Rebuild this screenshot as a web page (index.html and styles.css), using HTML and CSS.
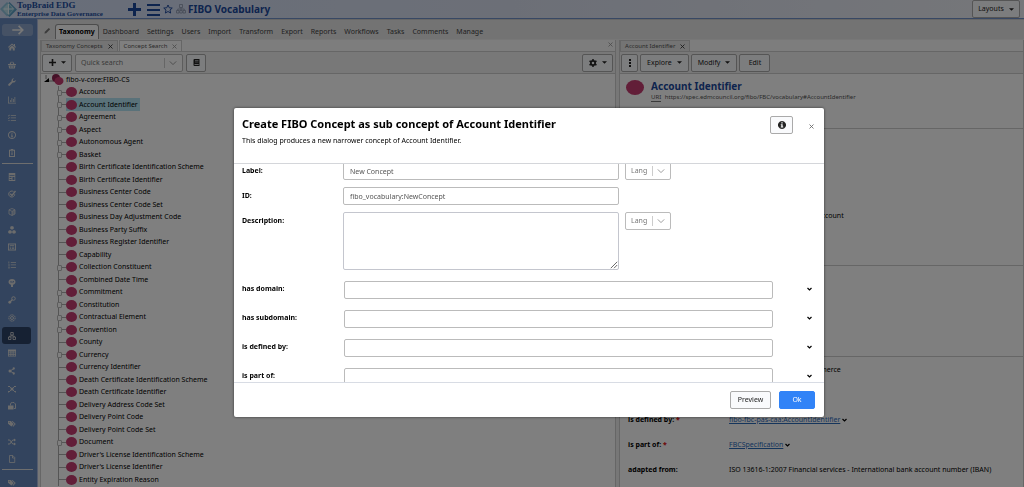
FILE: index.html
```html
<!DOCTYPE html>
<html lang="en">
<head>
<meta charset="utf-8">
<title>FIBO Vocabulary - TopBraid EDG</title>
<link rel="stylesheet" href="styles.css">
</head>
<body>
<svg class="defs" aria-hidden="true">
  <symbol id="caret" viewBox="0 0 8 8"><path d="M0 2h8L4 6z"/></symbol>
  <symbol id="cross" viewBox="0 0 10 10"><path d="M1 1l8 8M9 1L1 9" fill="none" stroke="currentColor" stroke-width="1.7"/></symbol>
  <symbol id="chev" viewBox="0 0 10 10"><path d="M1 3l4 4 4-4" fill="none" stroke="currentColor" stroke-width="1.2"/></symbol>
  <symbol id="chev-bold" viewBox="0 0 10 10"><path d="M1 2l4 4 4-4" fill="none" stroke="currentColor" stroke-width="2.4"/></symbol>
  <symbol id="tags" viewBox="0 0 16 16"><path fill-rule="evenodd" d="M0 2h5.500l6 6-4.500 5L0 7.500zM2.500 3.500a1 1 0 1 0 .1 0z"/><path d="M7 2h2l6.500 6-5 5.500-1.300-1.200L13 8z"/></symbol>
</svg>
<div class="app">
  <header class="top">
    <svg class="logo" viewBox="0 0 34 38"><path d="M0 18L14 4l5 5-9 9 9 9-5 6z" fill="#8fc3dc"/><path d="M19 4l15 15-15 15-5-5 10-10L14 9z" fill="#5d9fc4"/><path d="M5 18l12-12 12 12-12 13z" fill="#b8dce8"/><path d="M17 8l10 11-10 10" fill="#75b5cf"/><path d="M8 18h18M17 8v20" stroke="#e8f4fa" stroke-width="2"/></svg>
    <div class="brand"><span class="brand-a">TopBraid EDG</span><span class="brand-b">Enterprise Data Governance</span></div>
    <div class="title-area">
      <button class="ib" aria-label="New"><svg class="i13" viewBox="0 0 13 13"><path d="M5 0h3v5h5v3H8v5H5V8H0V5h5z"/></svg></button>
      <button class="ib" aria-label="Menu"><svg class="i13" viewBox="0 0 13 13"><path d="M0 1h13v2H0zm0 5h13v2H0zm0 5h13v2H0z"/></svg></button>
      <button class="ib" aria-label="Favorite"><svg class="i10" viewBox="0 0 20 20"><path d="M10 2l2.500 5.500 6 .6-4.500 4 1.300 6L10 15l-5.300 3.100 1.300-6-4.500-4 6-.6z" fill="none" stroke="currentColor" stroke-width="1.900"/></svg></button>
      <svg class="i10 pale" viewBox="0 0 20 20"><path d="M7 1h6v6H7zM1 13h5v5H1zm6.500 0h5v5h-5zm6.500 0h5v5h-5zM10 7v6M3.500 13v-3h13v3" fill="none" stroke="currentColor" stroke-width="1.600"/></svg>
      <h1>FIBO Vocabulary</h1>
    </div>
    <button class="btn layouts">Layouts <svg class="car"><use href="#caret"/></svg></button>
  </header>
  <div class="main">
    <nav class="side" aria-label="Tools">
      <button class="expand" aria-label="Expand"><svg viewBox="0 0 28 16"><path d="M7 8h14M15.500 2.500L21 8l-5.500 5.500" fill="none" stroke="currentColor" stroke-width="2.200"/></svg></button>
      <div class="group g1">
        <a href="#" aria-label="Home"><svg viewBox="0 0 16 16"><path d="M8 1L0 8l1 1.500 7-6 7 6L16 8l-2-2V2h-2v2z"/><path d="M2.500 9.500L8 5l5.500 4.500V15H9.500v-4h-3v4h-4z"/></svg></a>
        <a href="#" aria-label="Basket"><svg viewBox="0 0 16 16"><path d="M0 6h3l3-5 1.500 1L5.500 6h5L8.500 2 10 1l3 5h3v2H0z"/><path fill-rule="evenodd" d="M1 9h14l-1.500 6h-11zM4 10v4h1v-4zm3.500 0v4h1v-4zm3.500 0v4h1v-4z"/></svg></a>
        <a href="#" aria-label="Tools"><svg viewBox="0 0 16 16"><path d="M15.500 4a4.500 4.500 0 0 1-6 4.800L4 15a2 2 0 0 1-3-3l6.200-5.500A4.500 4.500 0 0 1 12 .7L9.700 3.500l.5 2.300 2.300.4z"/></svg></a>
        <a href="#" aria-label="Charts"><svg viewBox="0 0 16 16"><path d="M0 1h1.500v12.500H16V15H0zM4 8h1.500v4H4zm3-4h1.500v8H7zm3 2h1.500v6H10zm3-4h1.500v10H13z"/></svg></a>
        <a href="#" aria-label="Tasks"><svg viewBox="0 0 16 16"><path d="M0 2l1 1.500L3.500 1v2L1 5 0 4zM5.500 2H16v1.500H5.500zm0 5H16v1.500H5.500zm0 5H16v1.500H5.500zM0 7l1 1.500L3.500 6v2L1 10 0 9zM1 12h2v2H1z"/></svg></a>
        <a href="#" aria-label="Info"><svg viewBox="0 0 16 16"><path fill-rule="evenodd" d="M8 0a8 8 0 1 0 .01 0zM8 1.800a6.200 6.200 0 1 1-.01 0z"/><path d="M7 3.500h2v2H7zM6 7h3v4h1v1.500H6V11h1V8.500H6z"/></svg></a>
        <a href="#" aria-label="Clipboard"><svg viewBox="0 0 16 16"><path fill-rule="evenodd" d="M2 1.500h3.500V0h5v1.500H14V16H2zm2 2V14h8V3.500z"/><path d="M6.500 5h3v2h-3zm0 3h3v1.500h-3zm0 2.500h3V12h-3z"/></svg></a>
      </div>
      <hr>
      <div class="group g2">
        <a href="#" aria-label="Datasheet"><svg viewBox="0 0 16 16"><path fill-rule="evenodd" d="M1.500 0h13v16h-13zM3 4.500V6h10V4.500zM3 8v2h4V8zm6 0v6h4V8zm-6 4v2h4v-2z"/></svg></a>
        <a href="#" aria-label="Checks"><svg viewBox="0 0 16 16"><path d="M13.500 8.500A6 6 0 1 1 11 3.200" fill="none" stroke="currentColor" stroke-width="2"/><path d="M4.500 7.500L8 11l7-9" fill="none" stroke="currentColor" stroke-width="2.600"/></svg></a>
        <a href="#" aria-label="Cube"><svg viewBox="0 0 16 16"><path d="M8 1l6 2.500v8.500L8 15l-6-3V3.500zM2 4l6 2.500L14 4M8 6.500V15" fill="none" stroke="currentColor" stroke-width="1.500"/><path d="M8 6.500L14 4v8l-6 3z" opacity=".5"/></svg></a>
        <a href="#" aria-label="Cubes"><svg viewBox="0 0 16 16"><path d="M8 0l3.500 1.700v4L8 7.500 4.500 5.700v-4zM4 8l3.500 1.800v4L4 15.500.5 13.800v-4zm8 0l3.500 1.800v4L12 15.500l-3.500-1.700v-4z"/></svg></a>
        <a href="#" aria-label="Forms"><svg viewBox="0 0 16 16"><path fill-rule="evenodd" d="M0 1h16v14H0zm1.800 1.800v10.400h12.400V2.800z"/><path d="M3.500 4.500h9V6h-9zm0 3h3V9h-3zm4.500 0h4.500V9H8zm-4.500 3h3V12h-3zm4.500 0h4.500V12H8z"/></svg></a>
        <a href="#" aria-label="Ordered list"><svg viewBox="0 0 16 16"><path d="M1 1h1.500v4H1zm0 5.500h2v3H1zM1 11h2v4H1zM5.500 2H16v1.500H5.500zm0 5H16v1.500H5.500zm0 5H16v1.500H5.500z"/></svg></a>
        <a href="#" aria-label="Trees"><svg viewBox="0 0 16 16"><path fill-rule="evenodd" d="M8 0c4 0 7 2.500 7 6 0 3-2.500 5-5 5.500V16H6v-4.500C3.500 11 1 9 1 6c0-3.500 3-6 7-6zM5 4v3l2 1V4zm4 1v3l3-2V4z"/></svg></a>
        <a href="#" aria-label="Links"><svg viewBox="0 0 16 16"><circle cx="11" cy="5" r="3.500" fill="none" stroke="currentColor" stroke-width="2"/><path d="M8.500 7.500L4 12" stroke="currentColor" stroke-width="2.600"/><circle cx="3.500" cy="12.500" r="2.800"/></svg></a>
        <a href="#" aria-label="Settings"><svg viewBox="0 0 16 16"><circle cx="8" cy="8" r="6.300" fill="none" stroke="currentColor" stroke-width="2" stroke-dasharray="3 1.200"/><circle cx="8" cy="8" r="3" fill="none" stroke="currentColor" stroke-width="1.800"/></svg></a>
        <a href="#" class="on" aria-label="Taxonomies"><svg viewBox="0 0 16 16"><path d="M5.500 1h5v5h-5zM1 10h5v5H1zm9 0h5v5h-5zM8 6v2M3.500 10V8h9v2" fill="none" stroke="currentColor" stroke-width="1.600"/></svg></a>
        <a href="#" aria-label="Table"><svg viewBox="0 0 16 16"><path fill-rule="evenodd" d="M0 1h16v14H0zM1.500 5v2H5V5zm5 0v2h3V5zM11 5v2h3.500V5zM1.500 8.500v2H5v-2zm5 0v2h3v-2zm4.500 0v2h3.500v-2zM1.500 12v1.500H5V12zm5 0v1.500h3V12zm4.500 0v1.500h3.500V12z"/></svg></a>
        <a href="#" aria-label="Share"><svg viewBox="0 0 16 16"><path d="M12 3L4 8l8 5" fill="none" stroke="currentColor" stroke-width="1.800"/><circle cx="11.500" cy="3" r="2.300"/><circle cx="4" cy="8" r="3"/><circle cx="11.500" cy="13" r="2.300"/></svg></a>
        <a href="#" aria-label="Network"><svg viewBox="0 0 16 16"><path d="M2 2l12 12M14 2L2 14M0 3h4M12 3h4M1 12v3M15 12v3" stroke="currentColor" stroke-width="1.800"/><circle cx="8" cy="8" r="3"/></svg></a>
        <a href="#" aria-label="Unlock"><svg viewBox="0 0 16 16"><path d="M5 7V4a3.500 3.500 0 0 1 4-3h3l3 3v9h-3" fill="none" stroke="currentColor" stroke-width="1.800"/><path d="M0 7h11v8H0z"/></svg></a>
        <a href="#" aria-label="Tags"><svg><use href="#tags"/></svg></a>
        <a href="#" aria-label="Crosswalks"><svg viewBox="0 0 16 16"><path d="M0 4h3.500l6 8H13M0 12h3.500l6-8H13" fill="none" stroke="currentColor" stroke-width="2"/><path d="M12 1l4 3-4 3zM12 9l4 3-4 3z"/></svg></a>
        <a href="#" aria-label="File"><svg viewBox="0 0 16 16"><path d="M3 1h6.500L13.500 5v10H3zM9 1v5h4.500" fill="none" stroke="currentColor" stroke-width="1.600"/></svg></a>
      </div>
      <hr>
      <div class="group g3"><a href="#" aria-label="Labels"><svg><use href="#tags"/></svg></a></div>
    </nav>
    <div class="work">
      <nav class="tabs" aria-label="Sections">
        <svg class="pencil" viewBox="0 0 16 16"><path d="M1 15l1-4L11 2l3 3-9 9z"/></svg>
        <a href="#" class="cur">Taxonomy</a><a href="#">Dashboard</a><a href="#">Settings</a><a href="#">Users</a><a href="#">Import</a><a href="#">Transform</a><a href="#">Export</a><a href="#">Reports</a><a href="#">Workflows</a><a href="#">Tasks</a><a href="#">Comments</a><a href="#">Manage</a>
      </nav>
      <div class="panels">
        <section class="panel left">
          <div class="ptabs"><span class="ptab">Taxonomy Concepts <svg class="x"><use href="#cross"/></svg></span><span class="ptab open">Concept Search <svg class="x dim"><use href="#cross"/></svg></span><svg class="x dim far"><use href="#cross"/></svg></div>
          <div class="tools">
            <button class="btn add" aria-label="Add"><svg class="i7" viewBox="0 0 13 13"><path d="M5 0h3v5h5v3H8v5H5V8H0V5h5z"/></svg><svg class="car"><use href="#caret"/></svg></button>
            <div class="combo search"><input type="text" placeholder="Quick search" aria-label="Quick search"><svg class="cv"><use href="#chev"/></svg></div>
            <button class="btn book" aria-label="Book"><svg class="i7" viewBox="0 0 14 14"><path fill-rule="evenodd" d="M3 0h10v14H3a2 2 0 0 1-2-2V2a2 2 0 0 1 2-2zm1 3v1h7V3zm0 2.500v1h7v-1zM3 10.500V12h8.500v-1.500z"/></svg></button>
            <button class="btn gear" aria-label="Options"><svg class="i8" viewBox="0 0 16 16"><circle cx="8" cy="8" r="4.300" fill="none" stroke="currentColor" stroke-width="3.400"/><path d="M8 0v3M8 13v3M1.100 4l2.600 1.500M12.300 10.500l2.600 1.500M1.100 12l2.600-1.500M12.300 5.500L14.900 4" stroke="currentColor" stroke-width="3"/></svg><svg class="car"><use href="#caret"/></svg></button>
          </div>
          <div class="tree">
            <div class="root"><svg class="root-ic" viewBox="0 0 20 12"><path d="M0 8l5-4v4z"/><path d="M2 1v4M5 7h5" stroke="#888" stroke-width="1" fill="none"/><ellipse cx="12" cy="4" rx="4" ry="4" fill="#8c2450"/><ellipse cx="15" cy="7" rx="4.500" ry="4" fill="#c43c70"/></svg>fibo-v-core:FIBO-CS</div>
            <ul>
              <li class="k"><span>Account</span></li>
              <li class="k"><span class="sel">Account Identifier</span></li>
              <li class="k"><span>Agreement</span></li>
              <li class="k"><span>Aspect</span></li>
              <li class="k"><span>Autonomous Agent</span></li>
              <li class="k"><span>Basket</span></li>
              <li><span>Birth Certificate Identification Scheme</span></li>
              <li><span>Birth Certificate Identifier</span></li>
              <li><span>Business Center Code</span></li>
              <li><span>Business Center Code Set</span></li>
              <li><span>Business Day Adjustment Code</span></li>
              <li><span>Business Party Suffix</span></li>
              <li><span>Business Register Identifier</span></li>
              <li><span>Capability</span></li>
              <li class="k"><span>Collection Constituent</span></li>
              <li><span>Combined Date Time</span></li>
              <li class="k"><span>Commitment</span></li>
              <li class="k"><span>Constitution</span></li>
              <li class="k"><span>Contractual Element</span></li>
              <li class="k"><span>Convention</span></li>
              <li><span>County</span></li>
              <li class="k"><span>Currency</span></li>
              <li><span>Currency Identifier</span></li>
              <li><span>Death Certificate Identification Scheme</span></li>
              <li><span>Death Certificate Identifier</span></li>
              <li><span>Delivery Address Code Set</span></li>
              <li><span>Delivery Point Code</span></li>
              <li><span>Delivery Point Code Set</span></li>
              <li class="k"><span>Document</span></li>
              <li><span>Driver's License Identification Scheme</span></li>
              <li><span>Driver's License Identifier</span></li>
              <li><span>Entity Expiration Reason</span></li>
            </ul>
          </div>
        </section>
        <section class="panel right">
          <div class="ptabs"><span class="ptab">Account Identifier <svg class="x"><use href="#cross"/></svg></span></div>
          <div class="tools">
            <button class="btn dots" aria-label="More"><svg class="i8" viewBox="0 0 8 8"><path d="M3 0h2v2H3zm0 3h2v2H3zm0 3h2v2H3z"/></svg></button>
            <button class="btn">Explore <svg class="car"><use href="#caret"/></svg></button>
            <button class="btn">Modify <svg class="car"><use href="#caret"/></svg></button>
            <button class="btn edit">Edit</button>
          </div>
          <div class="res">
            <span class="blob"></span>
            <div><h2>Account Identifier</h2><p class="uri"><abbr>URI</abbr> https://spec.edmcouncil.org/fibo/FBC/vocabulary#AccountIdentifier</p></div>
          </div>
          <div class="sec s1"><p class="val">identifier for the customer account</p></div>
          <div class="sec s2"></div>
          <div class="sec s3">
            <p class="val">Financial Business and Commerce</p>
            <dl>
              <dt>is defined by: <b>*</b></dt><dd><a href="#">fibo-fbc-pas-caa:AccountIdentifier</a> <svg class="bc"><use href="#chev-bold"/></svg></dd>
              <dt>is part of: <b>*</b></dt><dd><a href="#">FBCSpecification</a> <svg class="bc"><use href="#chev-bold"/></svg></dd>
              <dt>adapted from:</dt><dd>ISO 13616-1:2007 Financial services - International bank account number (IBAN)</dd>
            </dl>
          </div>
        </section>
      </div>
    </div>
  </div>
</div>
<div class="overlay">
  <div class="dialog" role="dialog" aria-labelledby="dlg-title">
    <div class="dhead">
      <div class="dtext"><h3 id="dlg-title">Create FIBO Concept as sub concept of Account Identifier</h3><p>This dialog produces a new narrower concept of Account Identifier.</p></div>
      <button class="btn info" aria-label="Information"><svg class="i8" viewBox="0 0 16 16"><path fill-rule="evenodd" d="M8 0a8 8 0 1 0 .01 0zM6.700 2.500h2.600v2.600H6.700zM5.500 6.500h3.800V11h1.200v2h-5v-2h1.200V8.500H5.500z"/></svg></button>
      <button class="close" aria-label="Close"><svg><use href="#cross"/></svg></button>
    </div>
    <form class="dbody">
      <div class="row"><label for="f1">Label:</label><input class="mid" id="f1" type="text" value="New Concept"><div class="combo lang"><select aria-label="Label language"><option>Lang</option></select><svg class="cv"><use href="#chev"/></svg></div></div>
      <div class="row"><label for="f2">ID:</label><input class="mid" id="f2" type="text" value="fibo_vocabulary:NewConcept"></div>
      <div class="row desc"><label for="f3">Description:</label><div class="ta"><textarea id="f3"></textarea><svg viewBox="0 0 10 10"><path d="M1 9l8-8M5 9l4-4" stroke="#444" stroke-width="1" fill="none"/></svg></div><div class="combo lang"><select aria-label="Description language"><option>Lang</option></select><svg class="cv"><use href="#chev"/></svg></div></div>
      <div class="row wide"><label for="f4">has domain:</label><input id="f4" type="text"><button type="button" class="more" aria-label="has domain options"><svg class="bc"><use href="#chev-bold"/></svg></button></div>
      <div class="row wide"><label for="f5">has subdomain:</label><input id="f5" type="text"><button type="button" class="more" aria-label="has subdomain options"><svg class="bc"><use href="#chev-bold"/></svg></button></div>
      <div class="row wide"><label for="f6">is defined by:</label><input id="f6" type="text"><button type="button" class="more" aria-label="is defined by options"><svg class="bc"><use href="#chev-bold"/></svg></button></div>
      <div class="row wide"><label for="f7">is part of:</label><input id="f7" type="text"><button type="button" class="more" aria-label="is part of options"><svg class="bc"><use href="#chev-bold"/></svg></button></div>
    </form>
    <div class="dfoot"><button class="btn">Preview</button><button class="btn ok">Ok</button></div>
  </div>
</div>
</body>
</html>
```
FILE: styles.css
```css
* { box-sizing: border-box; }
body { margin: 0; font: 7px/12px "Noto Sans", sans-serif; color: #000; background: #fff; }
h1, h2, h3, p, ul, dl, dd { margin: 0; padding: 0; }
button, input, select, textarea { font: inherit; color: inherit; margin: 0; }
button { cursor: pointer; }
svg { fill: currentColor; flex: none; display: block; }
.defs { position: absolute; width: 0; height: 0; }
.i7 { width: 7px; height: 7px; }
.i8 { width: 8px; height: 8px; }
.i10 { width: 10px; height: 10px; }
.i13 { width: 13px; height: 13px; }
.car { width: 5px; height: 5px; }
.cv { width: 8px; height: 8px; }
.bc { width: 5px; height: 5px; }
.x { width: 5px; height: 5px; color: #333; }
.x.dim { color: #999; }

.app { height: 100vh; display: flex; flex-direction: column; overflow: hidden; }

.top { height: 19px; display: flex; align-items: center; background: linear-gradient(90deg, #d0dcf4, #d9dfef 50%, #eceef4); border-bottom: 1px solid #7090c8; padding-right: 4px; }
.logo { width: 17px; height: 19px; }
.brand { width: 111px; color: #1d4f9f; font-family: "Liberation Serif", serif; font-weight: bold; white-space: nowrap; display: flex; flex-direction: column; }
.brand-a { font-size: 9px; line-height: 10px; }
.brand-b { font-size: 7px; line-height: 8px; }
.title-area { display: flex; align-items: center; gap: 3px; flex: 1; color: #1b489c; }
.ib { border: 0; background: none; padding: 0; }
.ib + .ib { margin-left: 3px; }
.ib:nth-child(3) { margin-left: 0; }
.pale { color: #8b95ab; }
h1 { font-size: 10px; line-height: 16px; margin-left: -1px; }

.btn { height: 18px; padding: 0 6px; border: 1px solid #aaa; border-radius: 2px; background: #f9fafc; color: #222; display: flex; align-items: center; justify-content: center; gap: 5px; font-size: 7px; }
.layouts { width: 48px; }

.main { flex: 1; display: flex; min-height: 0; }
.side { width: 38px; background: #6688bc; border-right: 1px solid #aab8dc; padding: 5px 4px 0 2px; color: #d8d8d8; overflow: hidden; flex: none; }
.expand { width: 31px; height: 12px; border: 0; border-radius: 3px; background: #8da5cb; padding: 0; color: #eee; display: grid; place-items: center; margin-bottom: 2px; }
.expand svg { width: 21px; height: 12px; }
.group { display: grid; grid-auto-rows: 1fr; }
.g1 { height: 124px; }
.g2 { height: 300px; }
.g3 { height: 18px; }
.group a { color: inherit; width: 29px; border-radius: 3px; display: flex; align-items: center; padding-left: 6px; }
.group svg { width: 8px; height: 8px; }
.group .on { background: #2c4266; }
.side hr { height: 1px; width: 31px; background: #ddd; border: 0; margin: 1px 0 4px; }

.work { flex: 1; min-width: 0; display: flex; flex-direction: column; background: #f2f2f2; }
.tabs { height: 20px; background: #e6e6e6; display: flex; align-items: flex-end; gap: 8px; padding-left: 6px; border-top: 1px solid #ccc; font-size: 7px; }
.tabs a { color: #444; text-decoration: none; line-height: 15px; }
.tabs .cur { color: #000; font-weight: bold; background: #fff; border: 1px solid #999; border-bottom: 0; border-radius: 3px 3px 0 0; padding: 0 3px; line-height: 14px; margin-right: -4px; }
.pencil { width: 7px; height: 7px; color: #777; margin: 0 -4px 5px 0; }
.panels { flex: 1; display: flex; gap: 3px; padding: 1px 0 0 2px; min-height: 0; background: #efefef; }
.panel { display: flex; flex-direction: column; border-left: 1px solid #ccc; border-right: 1px solid #ccc; background: #fff; min-width: 0; overflow: hidden; }
.left { flex: 577; }
.right { flex: 405; }
.ptabs { height: 12px; display: flex; align-items: flex-end; gap: 1px; border-bottom: 1px solid #ccc; background: #fbfbfb; font-size: 6px; flex: none; }
.ptab { display: flex; align-items: center; gap: 5px; height: 11px; padding: 0 4px; background: #e8e8e8; color: #555; border: 1px solid #ccc; border-bottom: 0; }
.ptab.open { background: #fff; }
.far { margin: 0 2px 4px auto; }
.tools { height: 22px; background: #f0f0f0; border-bottom: 1px solid #ccc; display: flex; align-items: center; gap: 3px; padding: 0 2px 0 1px; flex: none; }
.right .tools { gap: 2px; }
.add { width: 30px; }
.book { width: 20px; }
.gear { width: 31px; margin-left: auto; }
.dots { width: 17px; }
.edit { width: 31px; }
.combo { height: 18px; display: flex; align-items: center; border: 1px solid #bbb; border-radius: 2px; background: #fff; color: #999; padding-right: 5px; }
.combo input, .combo select { flex: 1; min-width: 0; border: 0; outline: 0; background: none; appearance: none; padding: 0 0 0 5px; height: 10px; line-height: 10px; border-right: 1px solid #ccc; margin-right: 4px; color: #777; border-radius: 0; }
.combo input::placeholder { color: #777; }
.search { width: 108px; }

.tree { overflow: hidden; padding-left: 2px; }
.root { display: flex; align-items: center; gap: 2px; height: 12px; padding-left: 1px; }
.root-ic { width: 20px; height: 12px; }
.tree ul { list-style: none; margin-left: 15px; border-left: 1px solid #aaa; }
.tree li { height: 12px; line-height: 12px; display: flex; position: relative; }
.tree li:nth-child(even) { height: 13px; }
.tree li::before { content: ""; width: 7px; height: 1px; background: #aaa; margin-top: 6px; }
.tree li.k::after { content: ""; position: absolute; left: -2px; top: 4px; width: 3px; height: 4px; border: 1px solid #bbb; border-radius: 1px; background: #fff; }
.tree li span { display: flex; align-items: center; gap: 2px; padding-right: 2px; white-space: nowrap; }
.tree li span::before { content: ""; width: 11px; height: 10px; border-radius: 50%; background: #c43c70; }
.tree .sel { background: #b4e4f4; }

.res { display: flex; gap: 7px; padding: 6px 0 0 6px; height: 54px; }
.blob { width: 18px; height: 15px; border-radius: 50%; background: #c43c70; }
h2 { font-size: 10px; line-height: 12px; color: #1b489c; }
.uri { color: #555; font-size: 6px; line-height: 10px; white-space: nowrap; }
.uri abbr { border-bottom: 1px solid #777; margin-right: 2px; }
.sec { border-top: 1px solid #ccc; flex: none; padding-left: 8px; }
.s1 { height: 137px; padding-top: 81px; }
.s2 { height: 91px; }
.s3 { padding-top: 7px; }
.val { margin-left: 101px; white-space: nowrap; }
dl { display: grid; grid-template-columns: 101px 1fr; row-gap: 13px; margin-top: 38px; white-space: nowrap; }
dt { font-weight: bold; }
dt b { color: #d22; }
dd { display: flex; align-items: center; gap: 2px; }
dd a { color: #2a6ab8; }

.overlay { position: fixed; inset: 0; background: rgba(0, 0, 0, .5); display: flex; padding: 108px 200px 70px 234px; }
.dialog { flex: 1; min-width: 0; background: #fff; border-radius: 2px; box-shadow: 0 0 3px rgba(0, 0, 0, .6); display: flex; flex-direction: column; overflow: hidden; }
.dhead { height: 56px; display: flex; align-items: flex-start; border-bottom: 1px solid #d4d6da; padding: 8px 10px 0 8px; flex: none; }
.dtext { flex: 1; }
h3 { font-size: 11px; line-height: 16px; }
.dtext p { margin-top: 3px; }
.info { width: 23px; margin-right: 16px; border-color: #aaa; }
.close { border: 0; background: none; padding: 0; height: 20px; color: #666; }
.close svg { width: 5px; height: 5px; }
.dbody { flex: 1; min-height: 0; overflow: hidden; display: flex; flex-direction: column; }
.row { display: flex; align-items: flex-start; height: 25px; flex: none; padding-left: 8px; }
.row:first-child { margin-top: -2px; }
.row label { width: 101px; font-weight: bold; line-height: 18px; flex: none; }
.row input { height: 18px; border: 1px solid #bbb; border-radius: 2px; padding: 0 6px; color: #555; background: #fff; min-width: 0; }
.row .mid, .ta { width: 276px; margin-right: 6px; }
.lang { width: 46px; }
.row.desc { height: 69px; }
.ta { position: relative; height: 58px; }
.ta textarea { width: 100%; height: 100%; display: block; resize: none; border: 1px solid #c4c6ce; border-radius: 2px; }
.ta svg { position: absolute; right: 1px; bottom: 1px; width: 8px; height: 8px; }
.row.wide { height: 29px; padding-right: 12px; }
.row.wide label { width: 102px; line-height: 16px; }
.row.wide input { flex: 1; margin-right: 34px; }
.more { border: 0; background: none; padding: 4px 0 0; height: 12px; }
.dfoot { height: 35px; border-top: 1px solid #d8dce4; display: flex; align-items: center; justify-content: flex-end; gap: 8px; padding-right: 9px; flex: none; }
.dfoot .btn { width: 41px; }
.dfoot .ok { width: 36px; background: #3183f7; border-color: #3183f7; color: #fff; }
```
